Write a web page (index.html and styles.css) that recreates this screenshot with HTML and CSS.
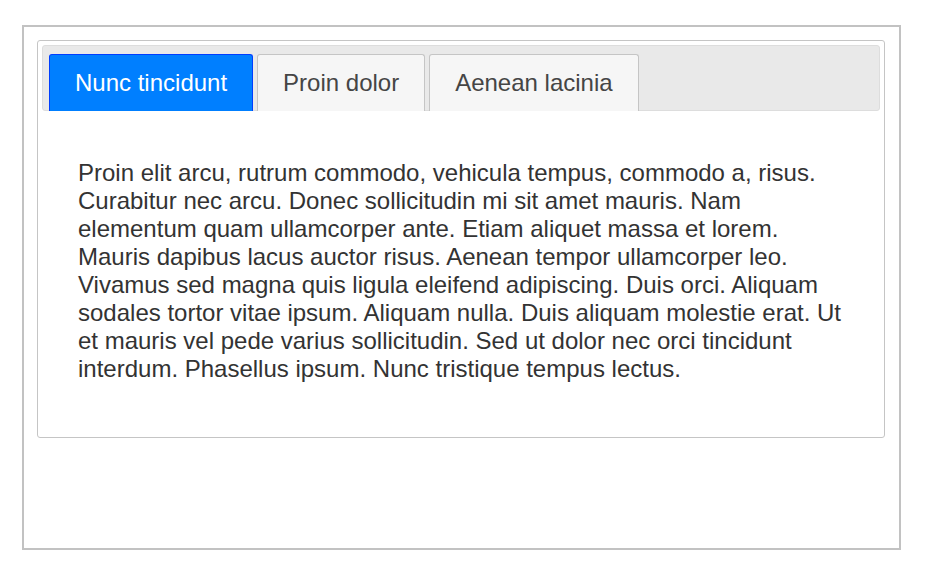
FILE: index.html
```html
<!DOCTYPE html>
<html>
<head>
<meta charset="utf-8">
<link rel="stylesheet" href="styles.css">
</head>
<body>
<div class="frame">
  <div class="tabs">
    <ul class="tab-nav">
      <li class="tab active">Nunc tincidunt</li>
      <li class="tab">Proin dolor</li>
      <li class="tab">Aenean lacinia</li>
    </ul>
    <div class="panel">
      <p>Proin elit arcu, rutrum commodo, vehicula tempus, commodo a, risus. Curabitur nec arcu. Donec sollicitudin mi sit amet mauris. Nam elementum quam ullamcorper ante. Etiam aliquet massa et lorem. Mauris dapibus lacus auctor risus. Aenean tempor ullamcorper leo. Vivamus sed magna quis ligula eleifend adipiscing. Duis orci. Aliquam sodales tortor vitae ipsum. Aliquam nulla. Duis aliquam molestie erat. Ut et mauris vel pede varius sollicitudin. Sed ut dolor nec orci tincidunt interdum. Phasellus ipsum. Nunc tristique tempus lectus.</p>
    </div>
  </div>
</div>
</body>
</html>
```
FILE: styles.css
```css
html, body {
  margin: 0;
  padding: 0;
  background: #fff;
}
body {
  font-family: "Liberation Sans", Arial, sans-serif;
  font-size: 24px;
}
.frame {
  box-sizing: border-box;
  margin: 25px 0 0 22px;
  width: 879px;
  height: 525px;
  border: 2px solid #c2c2c2;
  padding: 13px;
}
.tabs {
  width: 848px;
  box-sizing: border-box;
  border: 1px solid #c5c5c5;
  border-radius: 3px;
  padding: 4px;
}
.tab-nav {
  list-style: none;
  margin: 0;
  padding: 8px 6px 0 6px;
  display: flex;
  gap: 4px;
  background: #e9e9e9;
  border: 1px solid #dddddd;
  border-radius: 3px;
}
.tab {
  box-sizing: border-box;
  height: 57px;
  margin-bottom: -1px;
  padding: 0 25px;
  line-height: 56px;
  background: #f6f6f6;
  border: 1px solid #c5c5c5;
  border-bottom: 0;
  border-radius: 3px 3px 0 0;
  color: #454545;
  white-space: nowrap;
}
.tab.active {
  background: #007fff;
  border-color: #003eff;
  color: #fff;
}
.panel {
  padding: 48px 36px 50px 36px;
  color: #333;
}
.panel p {
  margin: 0;
  line-height: 28px;
}
```
